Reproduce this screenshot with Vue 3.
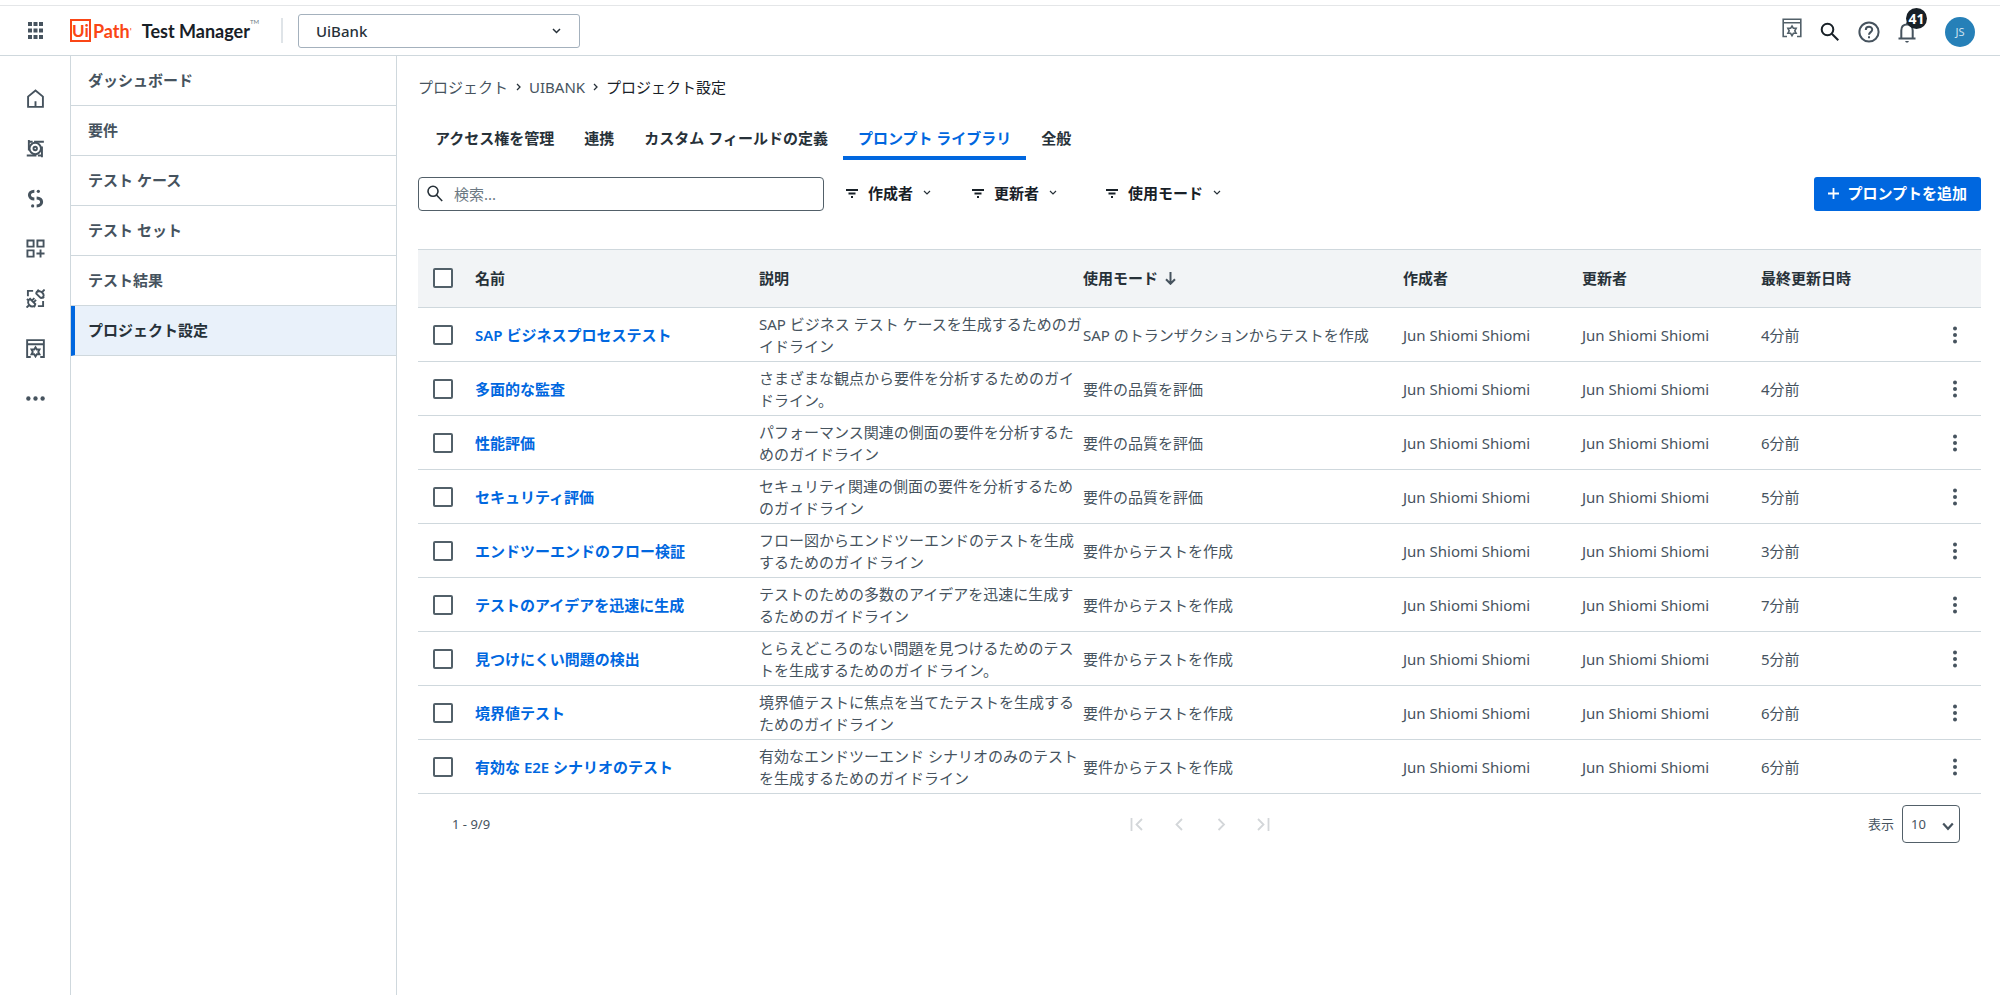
<script setup>
import { ref } from 'vue'

const menu = ['ダッシュボード', '要件', 'テスト ケース', 'テスト セット', 'テスト結果', 'プロジェクト設定']
const tabs = ['アクセス権を管理', '連携', 'カスタム フィールドの定義', 'プロンプト ライブラリ', '全般']
const filters = ['作成者', '更新者', '使用モード']
const query = ref('')
const pageSize = ref('10')

const req = '要件の品質を評価'
const gen = '要件からテストを作成'
const rows = [
  { name: 'SAP ビジネスプロセステスト', desc: 'SAP ビジネス テスト ケースを生成するためのガイドライン', mode: 'SAP のトランザクションからテストを作成', time: '4分前' },
  { name: '多面的な監査', desc: 'さまざまな観点から要件を分析するためのガイドライン。', mode: req, time: '4分前' },
  { name: '性能評価', desc: 'パフォーマンス関連の側面の要件を分析するためのガイドライン', mode: req, time: '6分前' },
  { name: 'セキュリティ評価', desc: 'セキュリティ関連の側面の要件を分析するためのガイドライン', mode: req, time: '5分前' },
  { name: 'エンドツーエンドのフロー検証', desc: 'フロー図からエンドツーエンドのテストを生成するためのガイドライン', mode: gen, time: '3分前' },
  { name: 'テストのアイデアを迅速に生成', desc: 'テストのための多数のアイデアを迅速に生成するためのガイドライン', mode: gen, time: '7分前' },
  { name: '見つけにくい問題の検出', desc: 'とらえどころのない問題を見つけるためのテストを生成するためのガイドライン。', mode: gen, time: '5分前' },
  { name: '境界値テスト', desc: '境界値テストに焦点を当てたテストを生成するためのガイドライン', mode: gen, time: '6分前' },
  { name: '有効な E2E シナリオのテスト', desc: '有効なエンドツーエンド シナリオのみのテストを生成するためのガイドライン', mode: gen, time: '6分前' },
]
const user = 'Jun Shiomi Shiomi'
</script>

<template>
  <div class="app">
    <header class="topbar">
      <button class="icon-btn launcher" aria-label="アプリ">
        <svg width="15" height="17" viewBox="0 0 15 17" fill="#46535e">
          <path d="M0 0h4v4H0zM5.500 0h4v4h-4zM11 0h4v4h-4zM0 6.500h4v4H0zM5.500 6.500h4v4h-4zM11 6.500h4v4h-4zM0 13h4v4H0zM5.500 13h4v4h-4zM11 13h4v4h-4z" />
        </svg>
      </button>
      <a class="brand" href="#" aria-label="UiPath Test Manager">
        <span class="logo-ui">Ui</span><span class="logo-path">Path</span><sup class="logo-dot">'</sup>
        <span class="product">Test Manager</span><sup class="tm">TM</sup>
      </a>
      <span class="divider"></span>
      <button class="project-picker">
        <span>UiBank</span>
        <svg width="9" height="6" viewBox="0 0 9 6" fill="none" stroke="#273139" stroke-width="1.500"><path d="M1 1l3.500 3.500L8 1" /></svg>
      </button>
      <div class="actions">
        <button class="icon-btn raised" aria-label="設定">
          <svg width="20" height="20" viewBox="0 0 20 20" fill="none" stroke="#526069" stroke-width="1.600">
            <path d="M5 18.500H1.200V1.200h17.600v17.300H15M1.200 4.800h17.600" />
            <path d="M10 8l1.400 2.300h2.700L12.800 12.800l1.300 2.500h-2.700L10 17.600l-1.400-2.300H5.900l1.300-2.500-1.300-2.500h2.700z" />
          </svg>
        </button>
        <button class="icon-btn" aria-label="検索">
          <svg width="20" height="20" viewBox="0 0 20 20" fill="none" stroke="#182027" stroke-width="2"><circle cx="7.500" cy="7.500" r="5.800" /><path d="M11.800 11.800l6.500 6.500" /></svg>
        </button>
        <button class="icon-btn" aria-label="ヘルプ">
          <svg width="22" height="22" viewBox="0 0 22 22" fill="none" stroke="#46535e" stroke-width="2"><circle cx="11" cy="11" r="9.600" /><path d="M7.800 9c0-4.200 6.400-4.100 6.400-.3 0 2.300-3.200 2.600-3.200 5" /><path d="M11 15.300v2" /></svg>
        </button>
        <button class="icon-btn bell" aria-label="通知">
          <svg width="18" height="22" viewBox="0 0 18 22" fill="none" stroke="#46535e" stroke-width="2"><path d="M.5 17.500h17M3.300 17.500V9.500C3.300 5.800 5.600 3.500 9 3.500s5.700 2.300 5.700 6v8M9 3.500V1.500" /><path d="M7 20h4l-1 1.500H8z" fill="#46535e" stroke="none" /></svg>
          <span class="badge">41</span>
        </button>
        <button class="avatar">JS</button>
      </div>
    </header>

    <div class="body">
      <nav class="rail" aria-label="メイン">
        <a href="#" aria-label="ホーム"><svg viewBox="0 0 20 20"><path d="M2.200 18.800V8L10 1.500 17.800 8v10.800zM10 18.800v-6" /></svg></a>
        <a href="#" aria-label="要件"><svg viewBox="0 0 20 20"><circle cx="9.700" cy="10" r="6" /><circle cx="9.700" cy="10" r="1.800" /><path d="M3 1v11M.8 17.300H11M16.800 19.200V8M18.800 2.900H8.500M3 2.900h4M12.500 17.300h4" /></svg></a>
        <a href="#" aria-label="テスト"><svg viewBox="0 0 20 20"><path stroke-width="3.200" d="M8.800 2.400C1.800 2.400 2 10.400 8.800 10.600M11.200 9.400c7 .2 7 8.200 0 8.400" /><g fill="#46535e" stroke="none"><circle cx="13" cy="2.400" r="1.700" /><circle cx="7" cy="17.800" r="1.700" /></g></svg></a>
        <a href="#" aria-label="アプリ"><svg viewBox="0 0 20 20"><path d="M1.500 1.500h6.500v6.500H1.500zM12 1.500h6.500v6.500H12zM1.500 12h6.500v6.500H1.500zM15.300 11v8.500M11 15.200h8.500" /></svg></a>
        <a href="#" aria-label="連携"><svg viewBox="0 0 20 20"><path d="M2 7.500V2h5.500M18 12.500V18h-5.500" /><path d="M10.800 4.800l4.600 4.600c1.600.2 3.200-1 3.200-2.700 0-1.300-.8-2.200-1.600-3-.8-.8-1.800-1.300-2.900-1.300-1.700 0-3.300.9-3.300 2.400zM16.800 3.400L19.600.6M13.600 2.400L12 .8M17.500 8l1.500 1.500" /><path d="M4.200 10.300l5.600 5.600c-.3 1.600-1.600 2.500-3.200 2.500-1.300 0-2.200-.6-2.900-1.300-.8-.8-1.500-1.800-1.500-3.100 0-1.700.6-2.900 2-3.700zM3.400 16.800L.6 19.600M6.200 12.200l2.600-2.600M8 14l2.600-2.600M2.500 12L1 10.500M8 17.500L9.600 19" /></svg></a>
        <a href="#" aria-label="設定"><svg viewBox="0 0 20 20"><path d="M5 19H1.200V1.200h17.600V19H15M1.200 5.500h17.600" /><path d="M10 8.800l1.400 2.300h2.800l-1.300 2.500 1.300 2.500h-2.800L10 18.400l-1.400-2.300H5.800l1.300-2.500-1.300-2.500h2.800z" /></svg></a>
        <a href="#" aria-label="その他"><svg viewBox="0 0 20 20"><g fill="#46535e" stroke="none"><circle cx="2.500" cy="10" r="2.300" /><circle cx="10" cy="10" r="2.300" /><circle cx="17.500" cy="10" r="2.300" /></g></svg></a>
      </nav>

      <nav class="side" aria-label="プロジェクト">
        <a v-for="(m, i) in menu" :key="m" href="#" :class="{ active: i === 5 }">{{ m }}</a>
      </nav>

      <main class="main">
        <nav class="crumbs" aria-label="パンくず">
          <a href="#">プロジェクト</a>
          <svg width="5" height="8" viewBox="0 0 5 8" fill="none" stroke="#273139" stroke-width="1.300"><path d="M1 1l3 3-3 3" /></svg>
          <a href="#">UIBANK</a>
          <svg width="5" height="8" viewBox="0 0 5 8" fill="none" stroke="#273139" stroke-width="1.300"><path d="M1 1l3 3-3 3" /></svg>
          <span class="current">プロジェクト設定</span>
        </nav>

        <div class="tabs" role="tablist">
          <button v-for="(t, i) in tabs" :key="t" role="tab" :aria-selected="i === 3" :class="{ active: i === 3 }">{{ t }}</button>
        </div>

        <div class="toolbar">
          <label class="search">
            <svg width="16" height="17" viewBox="0 0 16 17" fill="none" stroke="#273139" stroke-width="1.600"><circle cx="6" cy="6.300" r="5" /><path d="M9.500 10l5.700 6" /></svg>
            <input v-model="query" type="text" placeholder="検索..." aria-label="検索" />
          </label>
          <div class="filters">
            <button v-for="f in filters" :key="f">
              <svg width="12" height="9" viewBox="0 0 12 9" stroke="#182027" stroke-width="2"><path d="M0 1h12M2.500 4.500h7M5 8h2" /></svg>
              <span>{{ f }}</span>
              <svg width="8" height="6" viewBox="0 0 8 6" fill="none" stroke="#273139" stroke-width="1.200"><path d="M1 1l3 3 3-3" /></svg>
            </button>
          </div>
          <button class="primary">
            <svg width="11" height="11" viewBox="0 0 11 11" stroke="#fff" stroke-width="1.800"><path d="M5.500 0v11M0 5.500h11" /></svg>
            <span>プロンプトを追加</span>
          </button>
        </div>

        <table>
          <colgroup>
            <col class="c-check" /><col class="c-name" /><col class="c-desc" /><col class="c-mode" />
            <col class="c-user" /><col class="c-user" /><col class="c-time" />
          </colgroup>
          <thead>
            <tr>
              <th class="check"><input type="checkbox" aria-label="すべて選択" /></th>
              <th>名前</th>
              <th>説明</th>
              <th>使用モード <svg class="sort" width="11" height="13" viewBox="0 0 11 13" fill="none" stroke="#46535e" stroke-width="2"><path d="M5.500 0v12M1 7.300L5.500 11.800 10 7.300" /></svg></th>
              <th>作成者</th>
              <th>更新者</th>
              <th>最終更新日時</th>
            </tr>
          </thead>
          <tbody>
            <tr v-for="r in rows" :key="r.name">
              <td class="check"><input type="checkbox" :aria-label="r.name" /></td>
              <td><a href="#">{{ r.name }}</a></td>
              <td>{{ r.desc }}</td>
              <td>{{ r.mode }}</td>
              <td>{{ user }}</td>
              <td>{{ user }}</td>
              <td>
                <div class="last">
                  <span>{{ r.time }}</span>
                  <button class="icon-btn" aria-label="操作">
                    <svg width="4" height="18" viewBox="0 0 4 18" fill="#46535e"><circle cx="2" cy="2.500" r="2" /><circle cx="2" cy="9" r="2" /><circle cx="2" cy="15.500" r="2" /></svg>
                  </button>
                </div>
              </td>
            </tr>
          </tbody>
        </table>

        <footer class="pager">
          <span class="range">1 - 9/9</span>
          <div class="pages">
            <button disabled aria-label="最初"><svg width="14" height="13" viewBox="0 0 14 13"><path d="M1.500 0v13M12 1L6.500 6.500 12 12" /></svg></button>
            <button disabled aria-label="前へ"><svg width="14" height="13" viewBox="0 0 14 13"><path d="M10 1L4.500 6.500 10 12" /></svg></button>
            <button disabled aria-label="次へ"><svg width="14" height="13" viewBox="0 0 14 13"><path d="M4.500 1L10 6.500 4.500 12" /></svg></button>
            <button disabled aria-label="最後"><svg width="14" height="13" viewBox="0 0 14 13"><path d="M2 1l5.500 5.500L2 12M12.500 0v13" /></svg></button>
          </div>
          <div class="size">
            <label for="page-size">表示</label>
            <div class="select">
              <select id="page-size" v-model="pageSize"><option>10</option><option>25</option><option>50</option></select>
              <svg width="12" height="9" viewBox="0 0 12 9" fill="none" stroke="#46535e" stroke-width="2.200"><path d="M1.200 1.500L6 6.800l4.800-5.300" /></svg>
            </div>
          </div>
        </footer>
      </main>
    </div>
  </div>
</template>

<style>
body {
  background: #fff;
}
</style>

<style scoped>
.app {
  min-height: 100vh;
  display: flex;
  flex-direction: column;
  box-sizing: border-box;
  padding-top: 5px;
  font: 400 15px/22px "Noto Sans", "Noto Sans CJK JP", sans-serif;
  color: #46535e;
}
.app *,
.app *::before {
  box-sizing: border-box;
}
button,
input,
select {
  font: inherit;
  color: inherit;
  margin: 0;
}
button {
  border: 0;
  padding: 0;
  background: none;
  cursor: pointer;
}
a {
  color: inherit;
  text-decoration: none;
}
svg {
  display: block;
  flex: none;
}
.topbar {
  height: 51px;
  display: flex;
  align-items: center;
  border-top: 1px solid #e4e6e8;
  border-bottom: 1px solid #cfd8dd;
}
.icon-btn {
  display: flex;
  align-items: center;
  justify-content: center;
}
.launcher {
  width: 70px;
}
.brand {
  display: flex;
  align-items: center;
  font-family: Lato, sans-serif;
  white-space: nowrap;
}
.logo-ui {
  width: 21px;
  height: 23px;
  border: 2px solid #fa4616;
  color: #fa4616;
  font-size: 17px;
  line-height: 19px;
  font-weight: 700;
  text-align: center;
}
.logo-path {
  color: #fa4616;
  font-size: 18px;
  font-weight: 700;
  margin-left: 2px;
}
.logo-dot {
  color: #fa4616;
  font-size: 10px;
}
.product {
  margin-left: 10px;
  color: #182027;
  font-size: 18px;
  font-weight: 700;
}
.tm {
  font-size: 6px;
  color: #6b7882;
  align-self: flex-start;
  line-height: 6px;
}
.divider {
  width: 2px;
  height: 25px;
  margin: 0 15px 0 22px;
  background: #dfe4e8;
}
.project-picker {
  width: 282px;
  height: 34px;
  display: flex;
  align-items: center;
  justify-content: space-between;
  padding: 0 18px 0 17px;
  border: 1px solid #a4b1bd;
  border-radius: 3px;
  color: #273139;
  font-weight: 500;
}
.actions {
  margin-left: auto;
  display: flex;
  align-items: center;
  gap: 18px;
  padding: 2px 25px 0 0;
}
.raised {
  padding-bottom: 8px;
}
.bell {
  position: relative;
}
.badge {
  position: absolute;
  left: 8px;
  top: -13px;
  width: 21px;
  height: 21px;
  border-radius: 50%;
  background: #182027;
  color: #fff;
  font: 700 14px/21px "Noto Sans", sans-serif;
}
.avatar {
  width: 30px;
  height: 30px;
  margin-left: 11px;
  border-radius: 50%;
  background: #2680b8;
  color: #cfe2ef;
  font-size: 11px;
}
.body {
  flex: 1;
  display: flex;
}
.rail {
  width: 71px;
  flex: none;
  border-right: 1px solid #cfd8dd;
  padding-top: 17px;
}
.rail a {
  height: 50px;
  display: flex;
  align-items: center;
  justify-content: center;
}
.rail svg {
  width: 19px;
  height: 19px;
  fill: none;
  stroke: #46535e;
  stroke-width: 2;
}
.side {
  width: 326px;
  flex: none;
  border-right: 1px solid #cfd8dd;
}
.side a {
  height: 50px;
  display: flex;
  align-items: center;
  padding: 0 0 2px 17px;
  border-bottom: 1px solid #cfd8dd;
  font-weight: 600;
}
.side a.active {
  background: #e9f1fa;
  color: #273139;
  border-left: 4px solid #0067df;
  padding-left: 13px;
}
.main {
  flex: 1;
  min-width: 0;
  padding: 20px 19px 0 21px;
}
.crumbs {
  display: flex;
  align-items: center;
  gap: 8px;
}
.current {
  color: #182027;
}
.tabs {
  display: flex;
  margin: 22px 0 0 2px;
}
.tabs button {
  height: 40px;
  padding: 0 15px;
  border-bottom: 4px solid transparent;
  color: #273139;
  font-weight: 600;
}
.tabs .active {
  color: #0067df;
  border-color: #0067df;
}
.toolbar {
  display: flex;
  align-items: center;
  margin-top: 17px;
}
.search {
  width: 406px;
  height: 34px;
  display: flex;
  align-items: center;
  gap: 11px;
  padding: 0 8px 1px;
  border: 1px solid #526069;
  border-radius: 4px;
}
.search input {
  flex: 1;
  min-width: 0;
  border: 0;
  outline: 0;
  padding: 0;
  background: none;
}
.search input::placeholder {
  color: #6b7882;
  opacity: 1;
}
.filters {
  display: grid;
  grid-template-columns: 126px 134px auto;
  margin-left: 22px;
}
.filters button {
  display: flex;
  align-items: center;
  gap: 10px;
  padding-bottom: 2px;
  color: #182027;
  font-weight: 600;
}
.primary {
  height: 34px;
  margin-left: auto;
  display: flex;
  align-items: center;
  gap: 8px;
  padding: 0 14px 2px;
  border-radius: 3px;
  background: #0067df;
  color: #fff;
  font-weight: 600;
}
table {
  width: 100%;
  margin-top: 38px;
  border-collapse: collapse;
  table-layout: fixed;
}
.c-check {
  width: 57px;
}
.c-name {
  width: 284px;
}
.c-desc {
  width: 324px;
}
.c-mode {
  width: 320px;
}
.c-user {
  width: 179px;
}
th,
td {
  padding: 0;
  text-align: left;
  border-bottom: 1px solid #cfd8dd;
}
th {
  height: 58px;
  padding-bottom: 2px;
  background: #f2f4f6;
  border-top: 1px solid #cfd8dd;
  color: #273139;
  font-weight: 600;
}
td {
  height: 54px;
}
td a {
  color: #0067df;
  font-weight: 600;
}
.check {
  padding-left: 15px;
}
.check input {
  appearance: none;
  display: block;
  width: 20px;
  height: 20px;
  border: 2px solid #526069;
  border-radius: 2px;
  background: #fff;
}
.sort {
  display: inline-block;
  vertical-align: -1px;
  margin-left: 3px;
}
.last {
  display: flex;
  justify-content: space-between;
  align-items: center;
}
.last .icon-btn {
  width: 52px;
}
.pager {
  height: 60px;
  display: grid;
  grid-template-columns: 1fr auto 1fr;
  align-items: center;
  padding: 0 21px;
  font-size: 13px;
}
.range {
  padding-left: 13px;
}
.pages {
  display: flex;
  gap: 28px;
}
.pages svg {
  fill: none;
  stroke: #d3d6d9;
  stroke-width: 1.800;
}
.size {
  display: flex;
  align-items: center;
  justify-content: flex-end;
  gap: 8px;
}
.select {
  position: relative;
}
.select select {
  appearance: none;
  display: block;
  width: 58px;
  height: 38px;
  padding: 0 8px;
  border: 1px solid #526069;
  border-radius: 4px;
  background: #fff;
}
.select svg {
  position: absolute;
  right: 6px;
  top: 17px;
  pointer-events: none;
}
</style>
